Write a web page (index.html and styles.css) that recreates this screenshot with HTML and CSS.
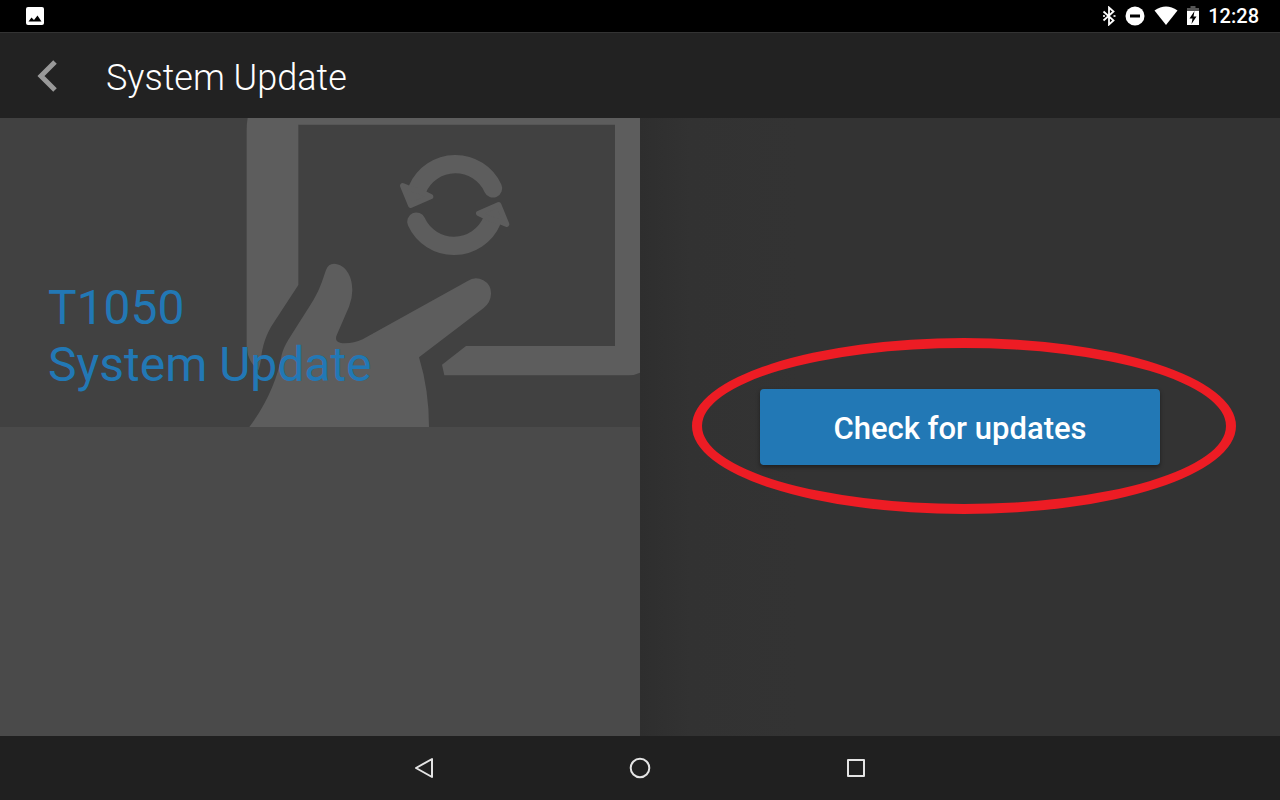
FILE: index.html
```html
<!doctype html>
<html lang="en">
<head>
    <meta charset="utf-8">
    <meta name="viewport" content="width=device-width, initial-scale=1">
    <title>System Update</title>
    <link rel="stylesheet" href="styles.css">
</head>

<body>
    <div class="statusbar">
        <svg class="picture" width="18" height="18" viewBox="0 0 18 18">
            <rect width="18" height="18" rx="2" fill="#fff"/>
            <path d="M2.500 14.500L5.500 10.500L8 13L11.500 8.500L15.500 14.500Z" fill="#000"/>
        </svg>
        <div class="status-icons">
            <svg width="14" height="20" viewBox="0 0 14 20">
                <path d="M1.500 5.500L11.500 14.500L7 18.500V1.500L11.500 5.500L1.500 14.500" fill="none" stroke="#fff" stroke-width="1.800"/>
                <path d="M1 9h2v2H1zM11.500 9h2v2h-2z" fill="#ccc"/>
            </svg>
            <svg width="20" height="20" viewBox="0 0 20 20">
                <circle cx="10" cy="10" r="9.500" fill="#fff"/>
                <path d="M5 8.500h10v3H5z" fill="#000"/>
            </svg>
            <svg width="24" height="20" viewBox="0 0 24 20">
                <path d="M.5 4.500Q12-3.500 23.500 4.500L12 19Z" fill="#fff"/>
            </svg>
            <svg width="12" height="20" viewBox="0 0 12 20">
                <path d="M3.500 0h5v2H12v4H0V2h3.500z" fill="#555"/>
                <path d="M0 5h12v14H0z" fill="#fff"/>
                <path d="M7.500 5L2.500 12.500h3L4.500 18L9.500 10.500h-3z" fill="#000"/>
            </svg>
            <span class="clock">12:28</span>
        </div>
    </div>

    <header class="header">
        <button class="back" type="button" aria-label="Back">
            <svg width="20" height="32" viewBox="0 0 20 32">
                <path d="M18 2L4 16L18 30" fill="none" stroke="#999" stroke-width="5"/>
            </svg>
        </button>
        <h1>System Update</h1>
    </header>

    <main class="content">
        <section class="info">
            <div class="hero">
                <svg class="art" viewBox="48 24 1182 927" fill="#5d5d5d">
                    <!-- tablet -->
                    <path d="M53 24H1230V788Q1214 796 1195 796H643L636 764L708 708H1155V44H205V525L130 640C110 670 96 708 93 750L86 780C62 762 50 736 50 705V60Q50 40 53 24Z"/>
                    <!-- hand -->
                    <path d="M58 951C110 882 143 805 155 735Q160 714 175 689L243 582C267 545 276 515 288 480Q295 461 312 461C344 463 367 494 367 540Q367 566 357 590L320 676C314 692 322 700 345 700Q372 700 398 688L713 513A45 45 0 0 1 783 552Q782 578 760 595L567 742Q597 840 597 951Z"/>
                    <!-- arrows -->
                    <g id="arrow">
                        <path d="M562 238A124 124 0 0 1 789 235" fill="none" stroke="#5d5d5d" stroke-width="55" stroke-linecap="round"/>
                        <path d="M518 227L542 286L602 260L570 244L540 236Z" stroke="#5d5d5d" stroke-width="16" stroke-linejoin="round"/>
                    </g>
                    <use href="#arrow" transform="rotate(180 674 285)"/>
                </svg>
                <h2>T1050<br>System Update</h2>
            </div>
        </section>
        <section class="action">
            <div class="highlight">
                <button class="check" type="button">Check for updates</button>
            </div>
        </section>
    </main>

    <nav class="navbar">
        <button type="button" aria-label="Back">
            <svg width="24" height="24" viewBox="0 0 24 24">
                <path d="M20 3V21L4 12Z"/>
            </svg>
        </button>
        <button type="button" aria-label="Home">
            <svg width="24" height="24" viewBox="0 0 24 24">
                <circle cx="12" cy="12" r="9.300"/>
            </svg>
        </button>
        <button type="button" aria-label="Recent apps">
            <svg width="24" height="24" viewBox="0 0 24 24">
                <rect x="4" y="4" width="16" height="16"/>
            </svg>
        </button>
    </nav>
</body>
</html>
```
FILE: styles.css
```css
* {
  box-sizing: border-box;
}

body {
  margin: 0;
  min-height: 100vh;
  display: flex;
  flex-direction: column;
  background: #202020;
  color: #fff;
  font-family: Roboto, sans-serif;
}

h1, h2 {
  margin: 0;
}

button {
  padding: 0;
  border: 0;
  background: none;
  color: inherit;
  font-family: inherit;
  cursor: pointer;
}

svg {
  display: block;
}

.statusbar {
  display: flex;
  align-items: center;
  justify-content: space-between;
  height: 32px;
  padding: 0 21px 0 26px;
  background: #000;
}

.status-icons {
  display: flex;
  align-items: center;
  gap: 9px;
}

.clock {
  font-size: 20px;
  font-weight: 500;
  line-height: 32px;
}

.header {
  display: flex;
  align-items: center;
  gap: 49px;
  height: 86px;
  padding: 4px 37px 0;
  border-top: 1px solid #333;
  background: #222;
}

.back {
  padding-bottom: 4px;
}

.header h1 {
  font-size: 36px;
  font-weight: 300;
}

/* two equal panes */
.content {
  flex: 1;
  display: grid;
  grid-template-columns: 1fr 1fr;
}

.info {
  display: grid;
  grid-template-rows: 1fr 1fr;
  background: #4a4a4a;
}

.hero {
  position: relative;
  display: flex;
  align-items: flex-end;
  padding: 0 48px 34px;
  background: #414141;
}

/* artwork lies behind the heading */
.art {
  position: absolute;
  top: 0;
  right: 0;
  height: 100%;
}

.hero h2 {
  position: relative;
  color: #2278b5;
  font-size: 48px;
  font-weight: 400;
  line-height: 57px;
}

.action {
  display: flex;
  align-items: center;
  justify-content: center;
  background: linear-gradient(to right, #2e2e2e, #323232 50px, #333 160px);
}

.highlight {
  position: relative;
}

/* red ring drawn round the button */
.highlight::after {
  content: "";
  position: absolute;
  inset: -51px -76px -49px -68px;
  border: 10px solid #ed1c24;
  border-radius: 50%;
  pointer-events: none;
}

.check {
  display: block;
  width: 400px;
  height: 76px;
  padding-top: 2px;
  border-radius: 4px;
  background: #2278b5;
  box-shadow: 0 2px 4px rgba(0,0,0,0.4);
  font-size: 31px;
  font-weight: 500;
}

.navbar {
  display: flex;
  align-items: center;
  justify-content: center;
  gap: 168px;
  height: 64px;
  background: #202020;
}

.navbar button {
  padding: 12px;
}

.navbar svg {
  fill: none;
  stroke: #e4e4e4;
  stroke-width: 2;
  stroke-linejoin: round;
}
```
